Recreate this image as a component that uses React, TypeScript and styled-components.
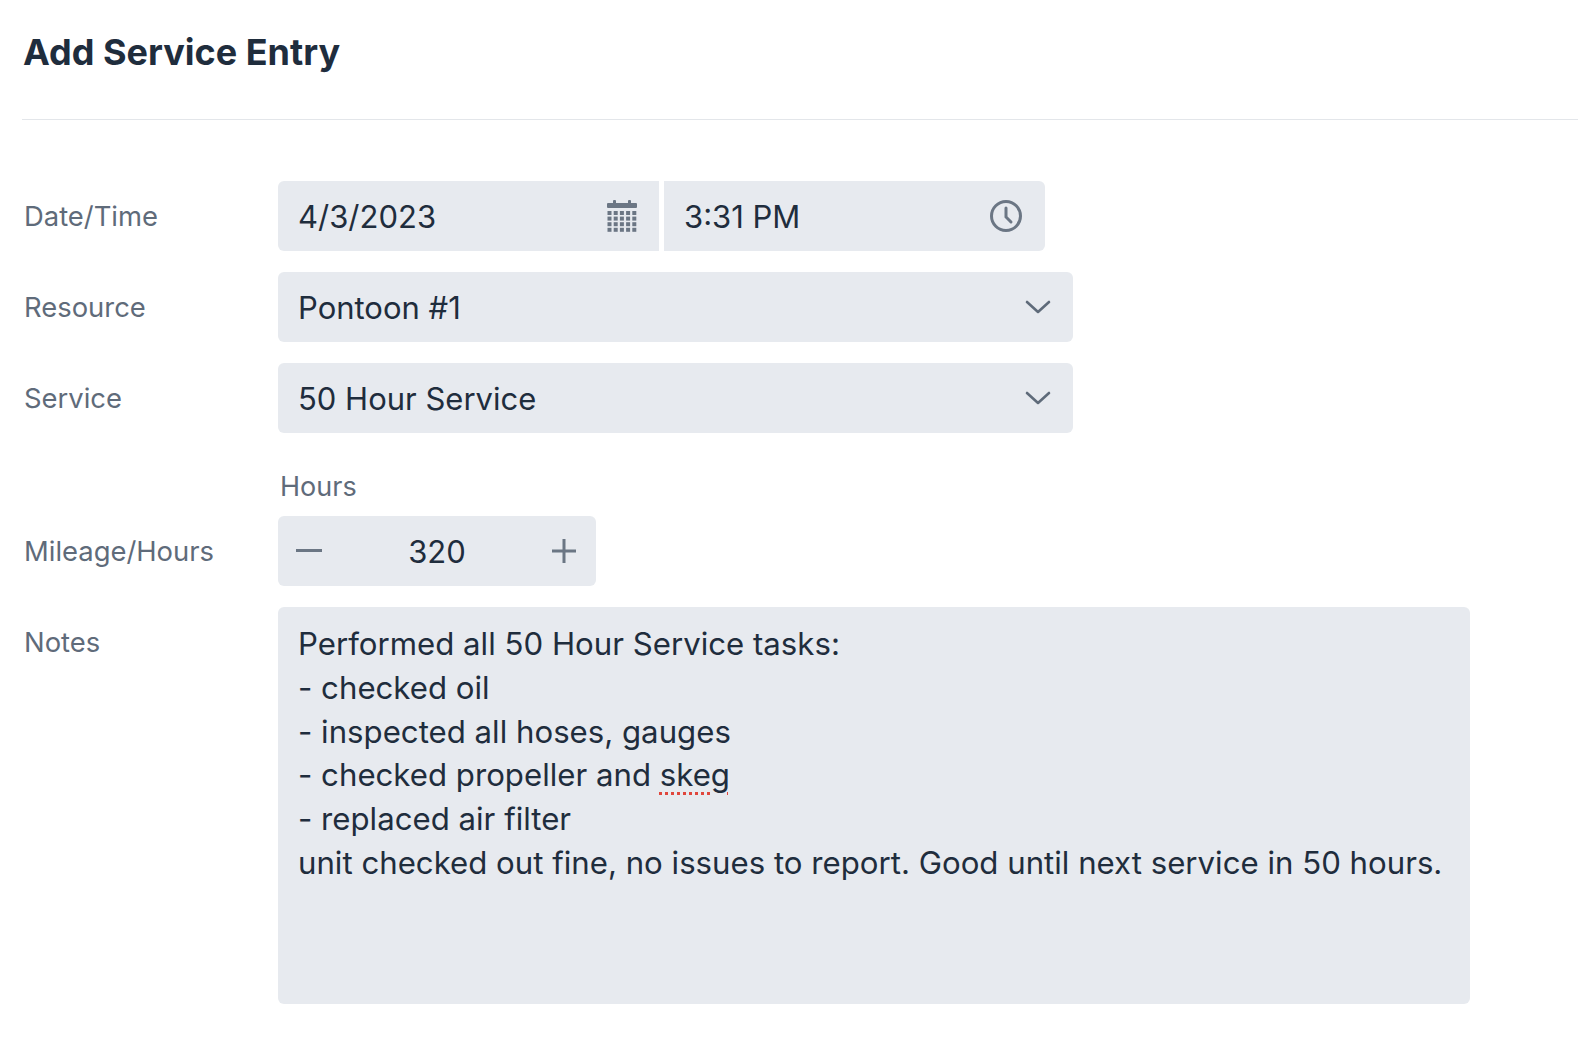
import React from "react";
import styled, { createGlobalStyle } from "styled-components";

const Global = createGlobalStyle`
  body { margin: 0; background: #fff; font-family: "Inter", "Noto Sans", sans-serif; color: #1f2d3d; }
`;
const Page = styled.div`padding: 0 0 0 22px;`;
const Title = styled.h1`
  margin: 0; padding: 30px 0 0 1px; height: 119px; box-sizing: border-box;
  font-size: 36px; font-weight: 700; color: #1f2d3d;
`;
const Divider = styled.div`height: 1px; background: #e3e6ea; margin-bottom: 61px;`;
const Form = styled.div`display: grid; grid-template-columns: 256px auto; row-gap: 21px; align-items: start;`;
const Label = styled.div<{ $top?: number }>`
  font-size: 27.4px; color: #5f6b7a; padding-left: 2px; margin-top: ${p => p.$top ?? 0}px;
  height: 70px; display: flex; align-items: center;
`;
const Field = styled.div<{ $w: number }>`
  width: ${p => p.$w}px; height: 70px; background: #e7eaef; border-radius: 6px;
  display: flex; align-items: center; justify-content: space-between; padding: 0 22px 0 20px; box-sizing: border-box;
  font-size: 31px; color: #1f2d3d;
`;
const Pair = styled.div`display: flex; gap: 5px;`;
const Left = styled(Field)`border-radius: 6px 0 0 6px;`;
const Right = styled(Field)`border-radius: 0 6px 6px 0;`;
const HoursBlock = styled.div`display: flex; flex-direction: column; gap: 14px;`;
const Small = styled.div`font-size: 27px; color: #5f6b7a; padding-left: 2px; height: 30px; line-height: 30px; margin-top: 18px;`;
const Stepper = styled(Field)`padding: 0 20px 0 18px;`;
const Notes = styled.div`
  width: 1192px; height: 397px; background: #e7eaef; border-radius: 6px; box-sizing: border-box;
  padding: 16px 20px; font-size: 31.2px; line-height: 43.8px; white-space: pre-wrap; color: #1f2d3d;
`;
const Squiggle = styled.span`text-decoration: underline dotted #e0463c; text-underline-offset: 6px;`;

const Chevron = () => (
  <svg width="26" height="16" viewBox="0 0 26 16" fill="none" stroke="#5f6b7a" strokeWidth="2.6" strokeLinecap="round" strokeLinejoin="round"><path d="M2 3l11 10 11-10" /></svg>
);
const Calendar = () => (
  <svg width="30" height="32" viewBox="0 0 30 32" fill="#6b7684">
    <rect x="0" y="3" width="30" height="5" rx="1" />
    <rect x="6" y="0" width="3" height="5" rx="1" /><rect x="21" y="0" width="3" height="5" rx="1" />
    {[0, 1, 2, 3].map(r => [0, 1, 2, 3, 4].map(c => <rect key={r + "-" + c} x={c * 6.2 + 0.5} y={11 + r * 5.6} width="4" height="4" />))}
  </svg>
);
const Clock = () => (
  <svg width="34" height="34" viewBox="0 0 34 34" fill="none" stroke="#6b7684" strokeWidth="3" strokeLinecap="round"><circle cx="17" cy="17" r="14.5" /><path d="M17 9v9l5 5" /></svg>
);

export default function App() {
  return (
    <Page>
      <Global />
      <Title>Add Service Entry</Title>
      <Divider />
      <Form>
        <Label>Date/Time</Label>
        <Pair>
          <Left $w={381}>4/3/2023<Calendar /></Left>
          <Right $w={381}>3:31 PM<Clock /></Right>
        </Pair>
        <Label>Resource</Label>
        <Field $w={795}>Pontoon #1<Chevron /></Field>
        <Label>Service</Label>
        <Field $w={795}>50 Hour Service<Chevron /></Field>
        <Label $top={62}>Mileage/Hours</Label>
        <HoursBlock>
          <Small>Hours</Small>
          <Stepper $w={318}>
            <svg width="26" height="4" viewBox="0 0 26 4"><rect width="26" height="3" fill="#6b7684" /></svg>
            <span>320</span>
            <svg width="24" height="24" viewBox="0 0 24 24" stroke="#6b7684" strokeWidth="3"><path d="M12 0v24M0 12h24" /></svg>
          </Stepper>
        </HoursBlock>
        <Label>Notes</Label>
        <Notes>{"Performed all 50 Hour Service tasks:\n- checked oil\n- inspected all hoses, gauges\n- checked propeller and "}<Squiggle>skeg</Squiggle>{"\n- replaced air filter\nunit checked out fine, no issues to report. Good until next service in 50 hours."}</Notes>
      </Form>
    </Page>
  );
}
